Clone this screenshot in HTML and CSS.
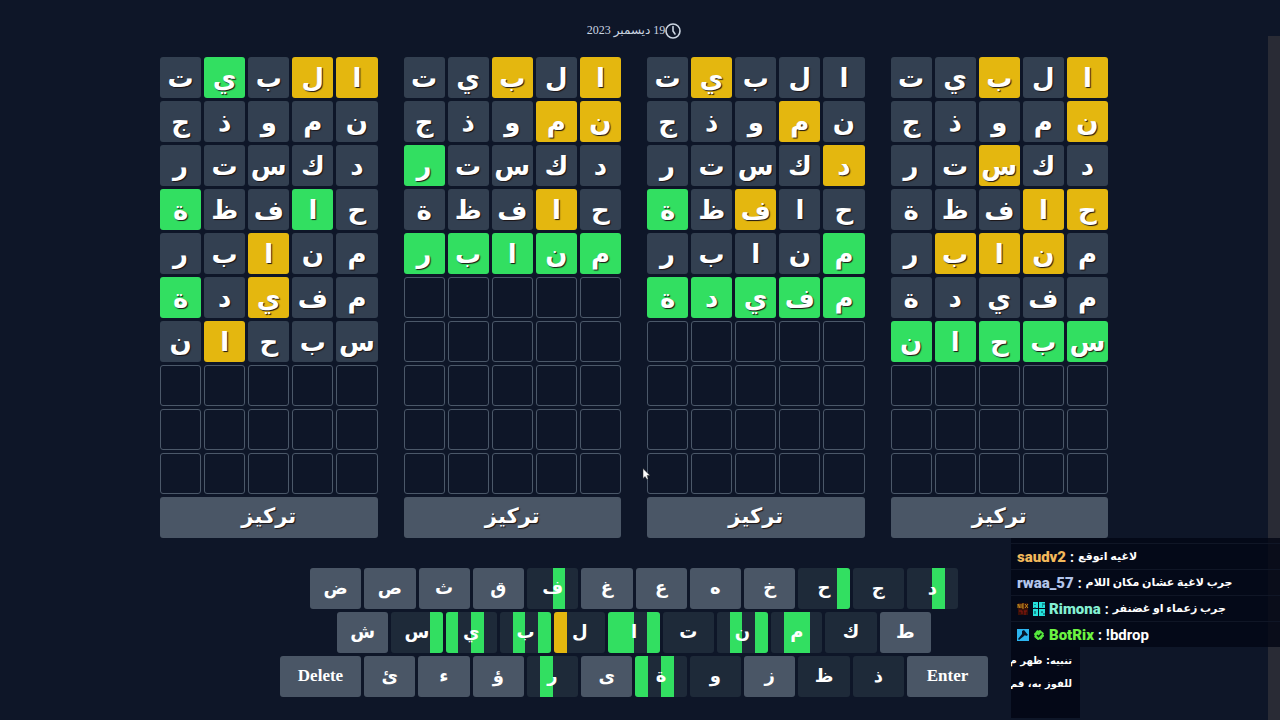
FILE: index.html
```html
<!DOCTYPE html>
<html lang="ar">
<head>
<meta charset="utf-8">
<title>19 ديسمبر 2023</title>
<link rel="stylesheet" href="styles.css">
</head>
<body>
<main class="game">
  <header class="date" dir="rtl">
    <svg class="clock" viewBox="0 0 24 24" fill="none" stroke="currentColor" stroke-width="2.4" stroke-linecap="round" stroke-linejoin="round"><circle cx="12" cy="12" r="10.5"/><path d="M12 5.5V12l3 4.5"/></svg>
    <span>19 ديسمبر 2023</span>
  </header>
  <section class="boards" id="boards"></section>
  <section class="keyboard" id="keyboard"></section>
</main>
<div class="scrollbar"></div>
<aside class="overlay">
  <ul class="chat">
    <li class="line"><b class="name gold">saudv2</b><span>:</span><span class="msg" dir="rtl">لاغيه اتوقع</span></li>
    <li class="line"><b class="name lilac">rwaa_57</b><span>:</span><span class="msg" dir="rtl">جرب لاغية عشان مكان اللام</span></li>
    <li class="line">
      <svg class="badge" viewBox="0 0 12 14"><path fill="#391008" d="M1 1h10v12H1z"/><path d="M1 2v4M1 2l2 4V2M5 2v4M5 2h2M5 4h2M5 6h2M8 2l3 4M11 2L8 6" stroke="#c18a1c" fill="none"/><path d="M2 9h3v3M7 9h3M8 9v4" stroke="#8c1710" fill="none"/></svg>
      <svg class="badge" viewBox="0 0 12 14"><path fill="#25e2dc" d="M0 0h5v6H0zM6 0h6v6H6zM0 7h5v7H0zM6 7h6v7H6z"/><path d="M2 2v1M2 5v2M9 2h3M9 4h1M2 9v3M9 9v2M10 12h2" stroke="#073d4a" fill="none"/></svg>
      <b class="name mint">Rimona</b><span>:</span><span class="msg" dir="rtl">جرب زعماء او غضنفر</span></li>
    <li class="line">
      <svg class="badge" viewBox="0 0 12 14"><path fill="#2cb4ef" d="M0 1h12v12H0z"/><path fill="#06142a" d="M5 3l2-1 4 5-2 1-1-1-1 1-5 4-1-1 4-5z"/></svg>
      <svg class="badge" viewBox="0 0 12 14"><circle cx="6" cy="7" r="4.500" fill="#55e83d" stroke="#55e83d" stroke-dasharray="2 1.500"/><path d="M4 7l1.600 1.700L8.500 5.600" stroke="#06200c" stroke-width="1.500" fill="none"/></svg>
      <b class="name lime">BotRix</b><span>:</span><span class="msg latin">!bdrop</span></li>
  </ul>
  <div class="notice" dir="rtl"><p>تنبيه: ظهر م</p><p>للفوز به، قم</p></div>
</aside>
<svg class="cursor" viewBox="0 0 8 13"><path d="M1 1v10l2-2 2 3 1-1-1-3h3z" fill="#fff" stroke="#222" stroke-width=".5"/></svg>
<script src="script.js"></script>
</body>
</html>
```

FILE: script.js
```
const words = ["البيت", "نموذج", "دكستر", "حافظة", "منابر", "مفيدة", "سبحان"];

// g = right place, y = wrong place, - = absent
const results = [
  ["yy-g-", "-----", "-----", "-g--g", "--y--", "--y-g", "---y-"],
  ["y-y--", "yy---", "----g", "-y---", "ggggg"],
  ["---y-", "-y---", "y----", "--y-g", "g----", "ggggg"],
  ["y-y--", "y----", "--y--", "yy---", "-yyy-", "-----", "ggggg"]
];
const kinds = { g: "hit", y: "near", "-": "miss" };

function make(tag, cls, text) {
  const el = document.createElement(tag);
  el.className = cls;
  if (text) el.textContent = text;
  return el;
}

const boards = document.getElementById("boards");
results.forEach(rows => {
  const board = make("div", "board");
  board.dir = "rtl";
  for (let r = 0; r < 10; r++) {
    for (let c = 0; c < 5; c++) {
      const played = rows[r];
      board.append(played
        ? make("div", "cell " + kinds[played[c]], words[r][c])
        : make("div", "cell empty"));
    }
  }
  const focus = make("button", "focus", "تركيز");
  focus.type = "button";
  board.append(focus);
  boards.append(board);
});

// letter, optionally followed by the state of each of the four boards
const layout = [
  ["ض", "ص", "ث", "ق", "ف--g-", "غ", "ع", "ه", "خ", "ح---g", "ج----", "د--g-"],
  ["ش", "س---g", "يg-g-", "ب-g-g", "لy---", "اgg-g", "ت----", "ن-g-g", "م-gg-", "ك----", "ط"],
  ["Delete", "ئ", "ء", "ؤ", "ر-g--", "ى", "ةg-g-", "و----", "ز", "ظ----", "ذ----", "Enter"]
];
const keyboard = document.getElementById("keyboard");
layout.forEach((row, i) => {
  const line = make("div", "keys keys-" + (i + 1));
  row.forEach(spec => {
    const wide = /^[A-Z]/.test(spec);
    const key = make("button", "key" + (wide ? " wide" : ""));
    key.type = "button";
    if (!wide && spec.length > 1) {
      key.classList.add("used");
      const parts = make("span", "parts");
      for (const s of spec.slice(1)) parts.append(make("span", "part " + (s === "-" ? "" : kinds[s])));
      key.append(parts);
    }
    key.append(make("span", "letter", wide ? spec : spec[0]));
    line.append(key);
  });
  keyboard.append(line);
});
```

FILE: styles.css
```css
* { box-sizing: border-box; }
body {
  margin: 0;
  min-height: 100vh;
  padding-right: 12px;
  background: #0e1628;
  color: #fff;
  font-family: "Liberation Serif", "DejaVu Sans", serif;
  overflow: hidden;
}
button { border: 0; padding: 0; color: inherit; font-family: inherit; }
.date {
  display: flex;
  justify-content: center;
  align-items: center;
  height: 57px;
  padding-top: 4px;
  font-size: 12px;
  color: #cbd5e1;
}
.clock { width: 16px; height: 16px; }
.boards {
  display: grid;
  grid-template-columns: repeat(4, 1fr);
  gap: 26px;
  max-width: 948px;
  margin: 0 auto;
}
.board {
  display: grid;
  grid-template-columns: repeat(5, 1fr);
  grid-auto-rows: 41px;
  gap: 3px;
}
.cell, .focus {
  display: flex;
  align-items: center;
  justify-content: center;
  min-width: 0;
  border-radius: 3px;
  font: bold 26px/40px "DejaVu Sans", sans-serif;
  text-shadow: 1px 1px 1px #1c1414;
}
.miss { background: #334051; }
.hit { background: #32df61; }
.near { background: #e4b70f; }
.empty { border: 1px solid #4b5869; }
.focus {
  grid-column: 1 / -1;
  padding-bottom: 3px;
  background: #4a5666;
  font-size: 21px;
}
.keyboard {
  display: flex;
  flex-direction: column;
  gap: 3px;
  max-width: 708px;
  margin: 30px auto 0;
}
.keys { display: flex; gap: 3px; height: 41px; }
.keys-1 { padding: 0 30px; }
.keys-2 { padding: 0 57px; }
.key {
  display: grid;
  flex: 1 1 0;
  min-width: 0;
  border-radius: 3px;
  overflow: hidden;
  background: #4a5666;
  font: bold 18px/40px "DejaVu Sans", sans-serif;
}
.key.used { background: #1e2a39; }
.key.wide { flex: 0 0 81px; font-family: "Liberation Serif", serif; }
.parts, .letter { grid-area: 1 / 1; }
.parts { display: grid; grid-template-columns: repeat(4, 1fr); }
.letter { text-align: center; z-index: 1; }
.key.wide .letter { font-size: 17px; }
.scrollbar { position: absolute; top: 36px; right: 0; bottom: 0; width: 12px; background: #292b35; }
.overlay { position: absolute; left: 1011px; right: 0; top: 538px; }
.chat {
  margin: 0;
  padding: 5px 0 0;
  list-style: none;
  background: rgba(3, 6, 20, 0.8);
  font: bold 14px/26px Roboto, "DejaVu Sans", sans-serif;
}
.line {
  display: flex;
  align-items: center;
  gap: 4px;
  height: 26px;
  padding-left: 6px;
  border-top: 1px solid #101626;
  white-space: nowrap;
}
.name { font-size: 15px; }
.msg { font-size: 11px; }
.msg.latin { font-size: 15px; }
.badge { width: 12px; height: 14px; }
.gold { color: #f3b95b; }
.lilac { color: #b3c5ec; }
.mint { color: #84f0d3; }
.lime { color: #6df442; }
.notice {
  width: 69px;
  height: 71px;
  padding: 2px 8px 0 0;
  overflow: hidden;
  background: #040817;
  font: bold 10px/23px "DejaVu Sans", sans-serif;
  white-space: nowrap;
}
.notice p { margin: 0; }
.cursor { position: absolute; left: 642px; top: 467px; width: 8px; height: 14px; }
```
